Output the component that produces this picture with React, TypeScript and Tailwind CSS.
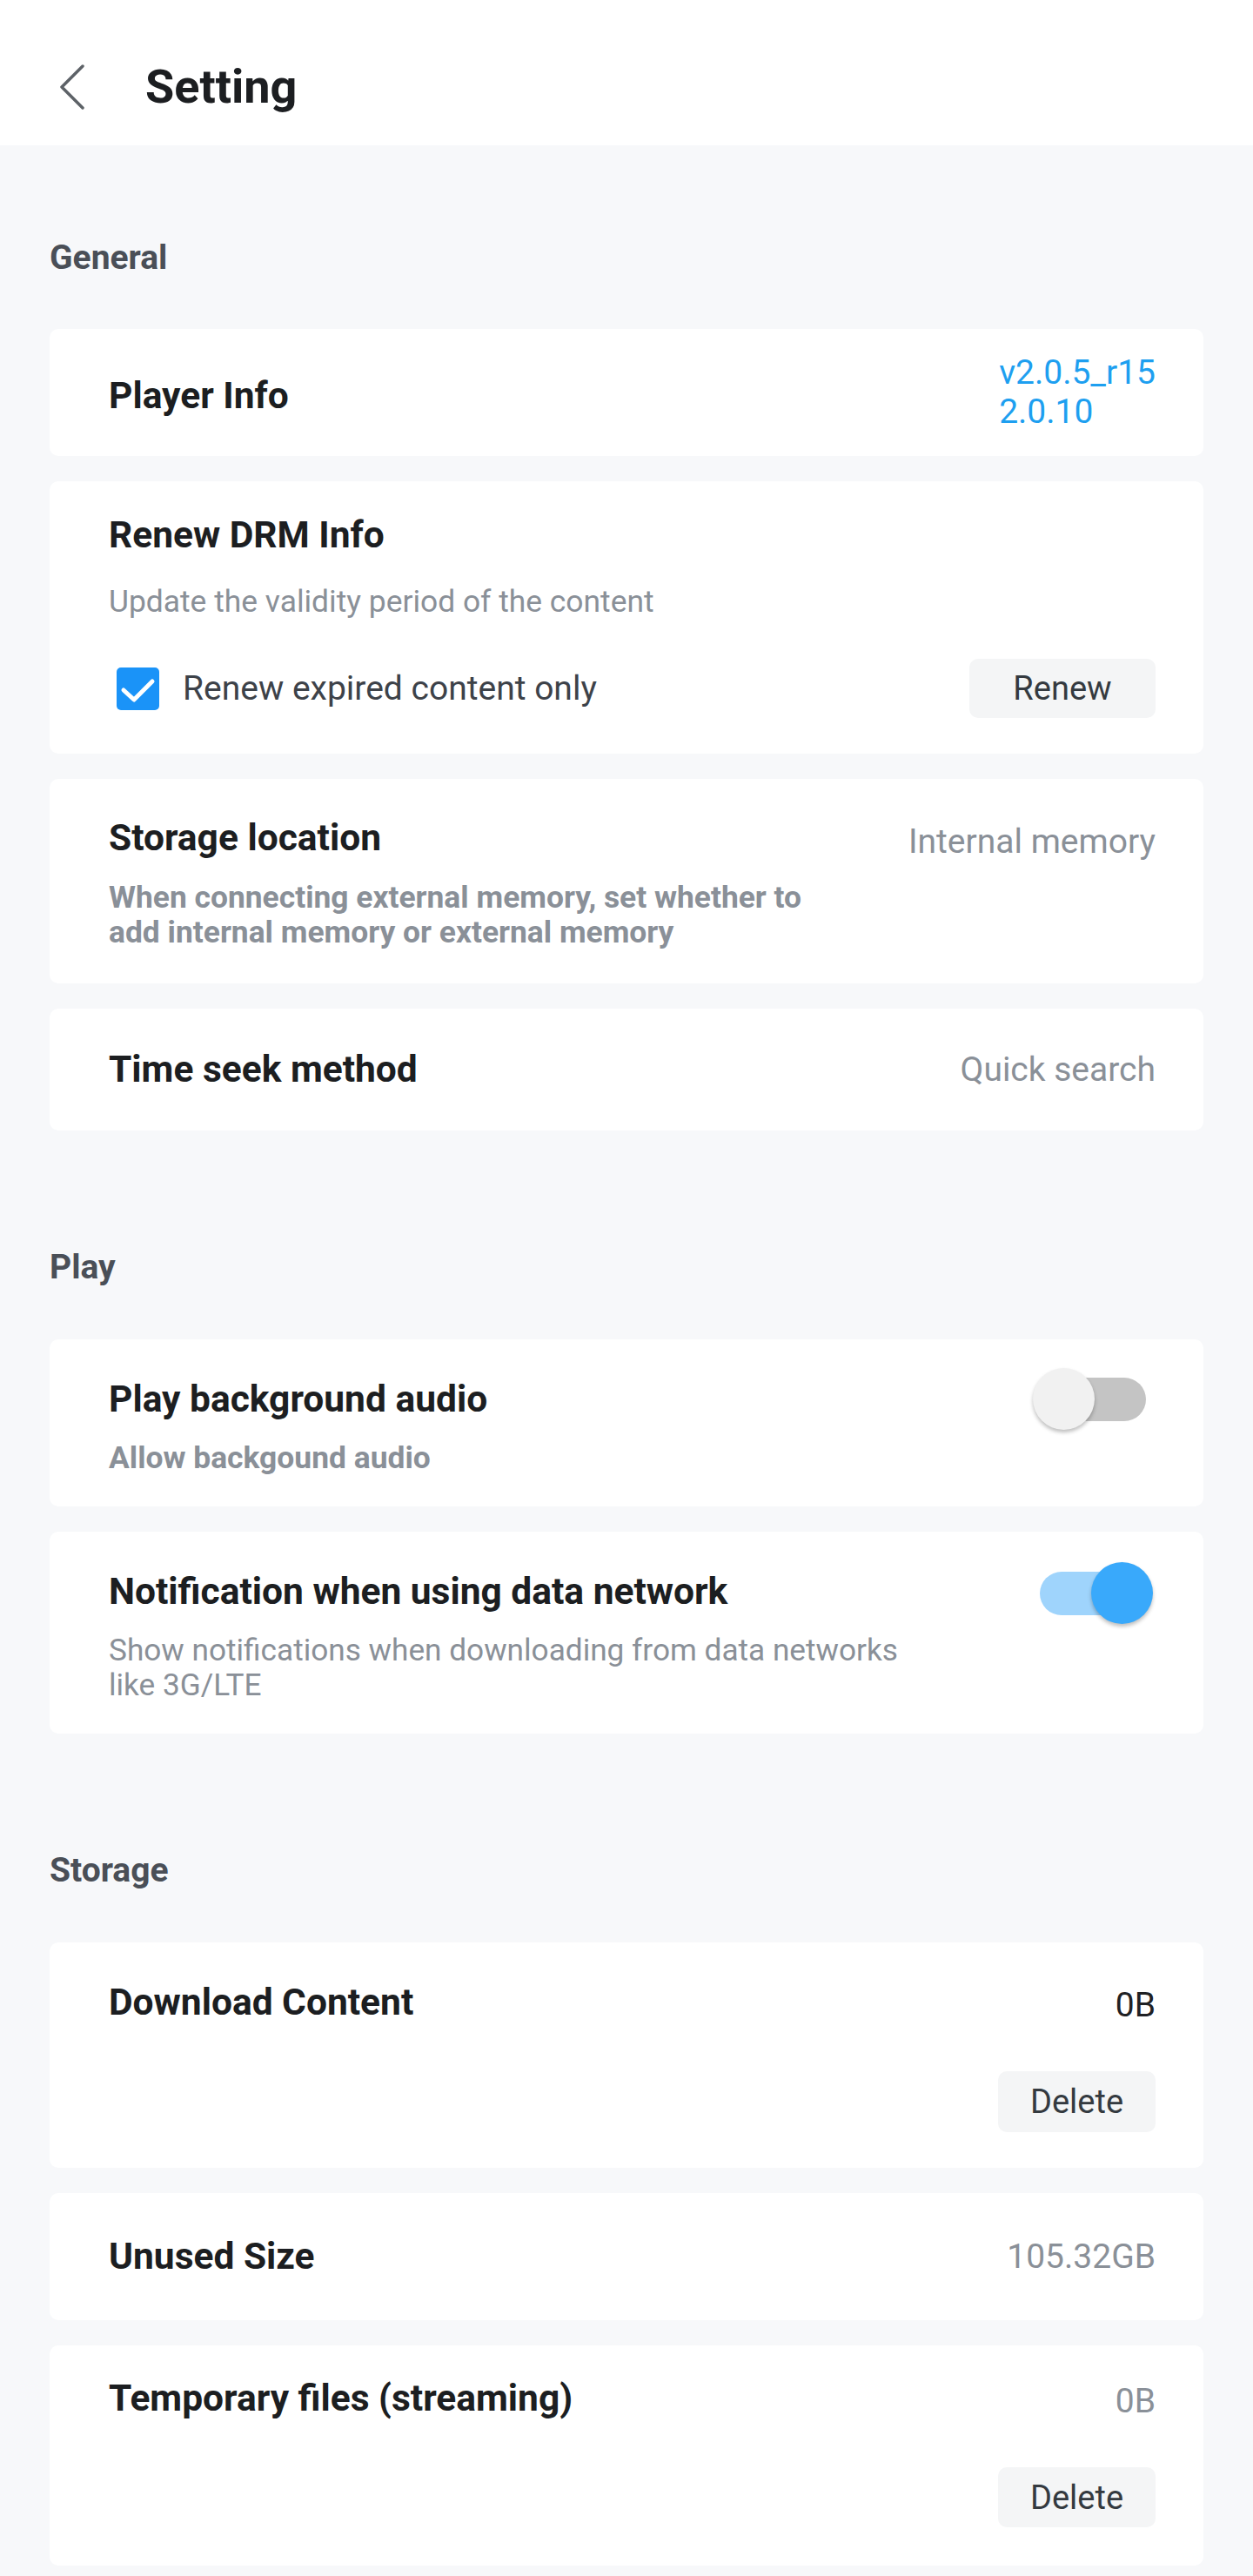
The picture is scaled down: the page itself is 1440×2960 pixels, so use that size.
import React from "react";

function Toggle({ on }: { on: boolean }) {
  return (
    <div className="relative h-[72px] w-[142px]">
      <div
        className={
          on
            ? "absolute left-[12px] top-[11px] h-[50px] w-[118px] rounded-full bg-[#9fd4fc]"
            : "absolute left-[12px] top-[11px] h-[50px] w-[118px] rounded-full bg-[#c4c4c4]"
        }
      />
      <div
        className={
          on
            ? "absolute right-0 top-0 h-[71px] w-[71px] rounded-full bg-[#39a9fb] shadow-[0_3px_4px_rgba(0,0,0,0.25)]"
            : "absolute left-0 top-0 h-[71px] w-[71px] rounded-full bg-[#f1f1f1] shadow-[0_3px_4px_rgba(0,0,0,0.25)]"
        }
      />
    </div>
  );
}

function Card({ children, className = "" }: { children: React.ReactNode; className?: string }) {
  return <div className={"rounded-[10px] bg-white pl-[68px] pr-[55px] " + className}>{children}</div>;
}

function Title({ children }: { children: React.ReactNode }) {
  return <div className="text-[42.5px] font-bold leading-[50px] text-[#1c1e21]">{children}</div>;
}

function SectionLabel({ children, first }: { children: React.ReactNode; first?: boolean }) {
  return (
    <div
      className={
        first
          ? "pt-[106px] pb-[59px] text-[39px] font-bold leading-[46px] text-[#4a4f57]"
          : "pt-[134px] pb-[60px] text-[39px] font-bold leading-[46px] text-[#4a4f57]"
      }
    >
      {children}
    </div>
  );
}

function GrayButton({ label, w, h }: { label: string; w: string; h: string }) {
  return (
    <div
      className={
        "flex items-center justify-center rounded-[10px] bg-[#f4f5f6] text-[38px] leading-[46px] text-[#343a40] " +
        w +
        " " +
        h
      }
    >
      {label}
    </div>
  );
}

export default function App() {
  return (
    <div className="min-h-[2960px] bg-[#f7f8fa] font-[Roboto,sans-serif]">
      <header className="h-[167px] bg-white pl-[68px] pt-[69px]">
        <div className="flex h-[62px] items-center gap-[69px]">
          <svg width="30" height="52" viewBox="0 0 30 52" fill="none">
            <path
              d="M27 2 L3 26 L27 50"
              stroke="#5d6267"
              strokeWidth="3.5"
              strokeLinecap="round"
              strokeLinejoin="round"
            />
          </svg>
          <h1 className="text-[54px] font-bold leading-[62px] text-[#1c1e21]">Setting</h1>
        </div>
      </header>

      <main className="px-[57px] pb-[13px]">
        <SectionLabel first>General</SectionLabel>
        <div className="flex flex-col gap-[29px]">
          <Card className="flex h-[146px] items-center justify-between">
            <div className="mt-[8px]">
              <Title>Player Info</Title>
            </div>
            <div className="text-[39px] leading-[45px] text-[#1e9ff0]">
              <div>v2.0.5_r15</div>
              <div>2.0.10</div>
            </div>
          </Card>

          <Card className="pt-[37px] pb-[41px]">
            <Title>Renew DRM Info</Title>
            <div className="mt-[29px] text-[35.4px] leading-[44px] text-[#8a9098]">
              Update the validity period of the content
            </div>
            <div className="mt-[44px] flex items-center justify-between">
              <div className="flex items-center">
                <div className="ml-[9px] flex h-[49px] w-[49px] items-center justify-center rounded-[5px] bg-[#1a93f8]">
                  <svg width="49" height="49" viewBox="0 0 49 49" fill="none">
                    <path
                      d="M8 26 L20 37 L41 16"
                      stroke="white"
                      strokeWidth="5"
                      strokeLinecap="round"
                      strokeLinejoin="round"
                    />
                  </svg>
                </div>
                <span className="ml-[27px] text-[39px] leading-[46px] text-[#3d4249]">
                  Renew expired content only
                </span>
              </div>
              <GrayButton label="Renew" w="w-[214px]" h="h-[68px]" />
            </div>
          </Card>

          <Card className="flex items-start justify-between">
            <div className="pt-[43px] pb-[39px]">
              <Title>Storage location</Title>
              <div className="mt-[23px] text-[35.4px] font-bold leading-[40px] text-[#8a9098]">
                When connecting external memory, set whether to
                <br />
                add internal memory or external memory
              </div>
            </div>
            <div className="pt-[49px] text-[39px] leading-[46px] text-[#8a9098]">Internal memory</div>
          </Card>

          <Card className="flex h-[140px] items-center justify-between">
            <Title>Time seek method</Title>
            <div className="text-[39px] leading-[46px] text-[#8a9098]">Quick search</div>
          </Card>
        </div>

        <SectionLabel>Play</SectionLabel>
        <div className="flex flex-col gap-[29px]">
          <Card className="flex items-start justify-between">
            <div className="pt-[44px] pb-[36px]">
              <Title>Play background audio</Title>
              <div className="mt-[22px] text-[35.4px] font-bold leading-[40px] text-[#8a9098]">
                Allow backgound audio
              </div>
            </div>
            <div className="-mr-[1px] pt-[33px]">
              <Toggle on={false} />
            </div>
          </Card>

          <Card className="flex items-start justify-between">
            <div className="pt-[44px] pb-[36px]">
              <Title>Notification when using data network</Title>
              <div className="mt-[22px] text-[35.2px] leading-[40px] text-[#8a9098]">
                Show notifications when downloading from data networks
                <br />
                like 3G/LTE
              </div>
            </div>
            <div className="mr-[3px] pt-[35px]">
              <Toggle on={true} />
            </div>
          </Card>
        </div>

        <SectionLabel>Storage</SectionLabel>
        <div className="flex flex-col gap-[29px]">
          <Card className="pt-[44px] pb-[41px]">
            <div className="flex items-start justify-between">
              <Title>Download Content</Title>
              <div className="mt-[5px] text-[39px] leading-[46px] text-[#1f2124]">0B</div>
            </div>
            <div className="mt-[53px] flex justify-end">
              <GrayButton label="Delete" w="w-[181px]" h="h-[70px]" />
            </div>
          </Card>

          <Card className="flex h-[146px] items-center justify-between">
            <Title>Unused Size</Title>
            <div className="text-[39px] leading-[46px] text-[#8a9098]">105.32GB</div>
          </Card>

          <Card className="pt-[36px] pb-[44px]">
            <div className="flex items-start justify-between">
              <Title>Temporary files (streaming)</Title>
              <div className="mt-[5px] text-[39px] leading-[46px] text-[#8a9098]">0B</div>
            </div>
            <div className="mt-[53px] flex justify-end">
              <GrayButton label="Delete" w="w-[181px]" h="h-[69px]" />
            </div>
          </Card>
        </div>
      </main>
    </div>
  );
}
